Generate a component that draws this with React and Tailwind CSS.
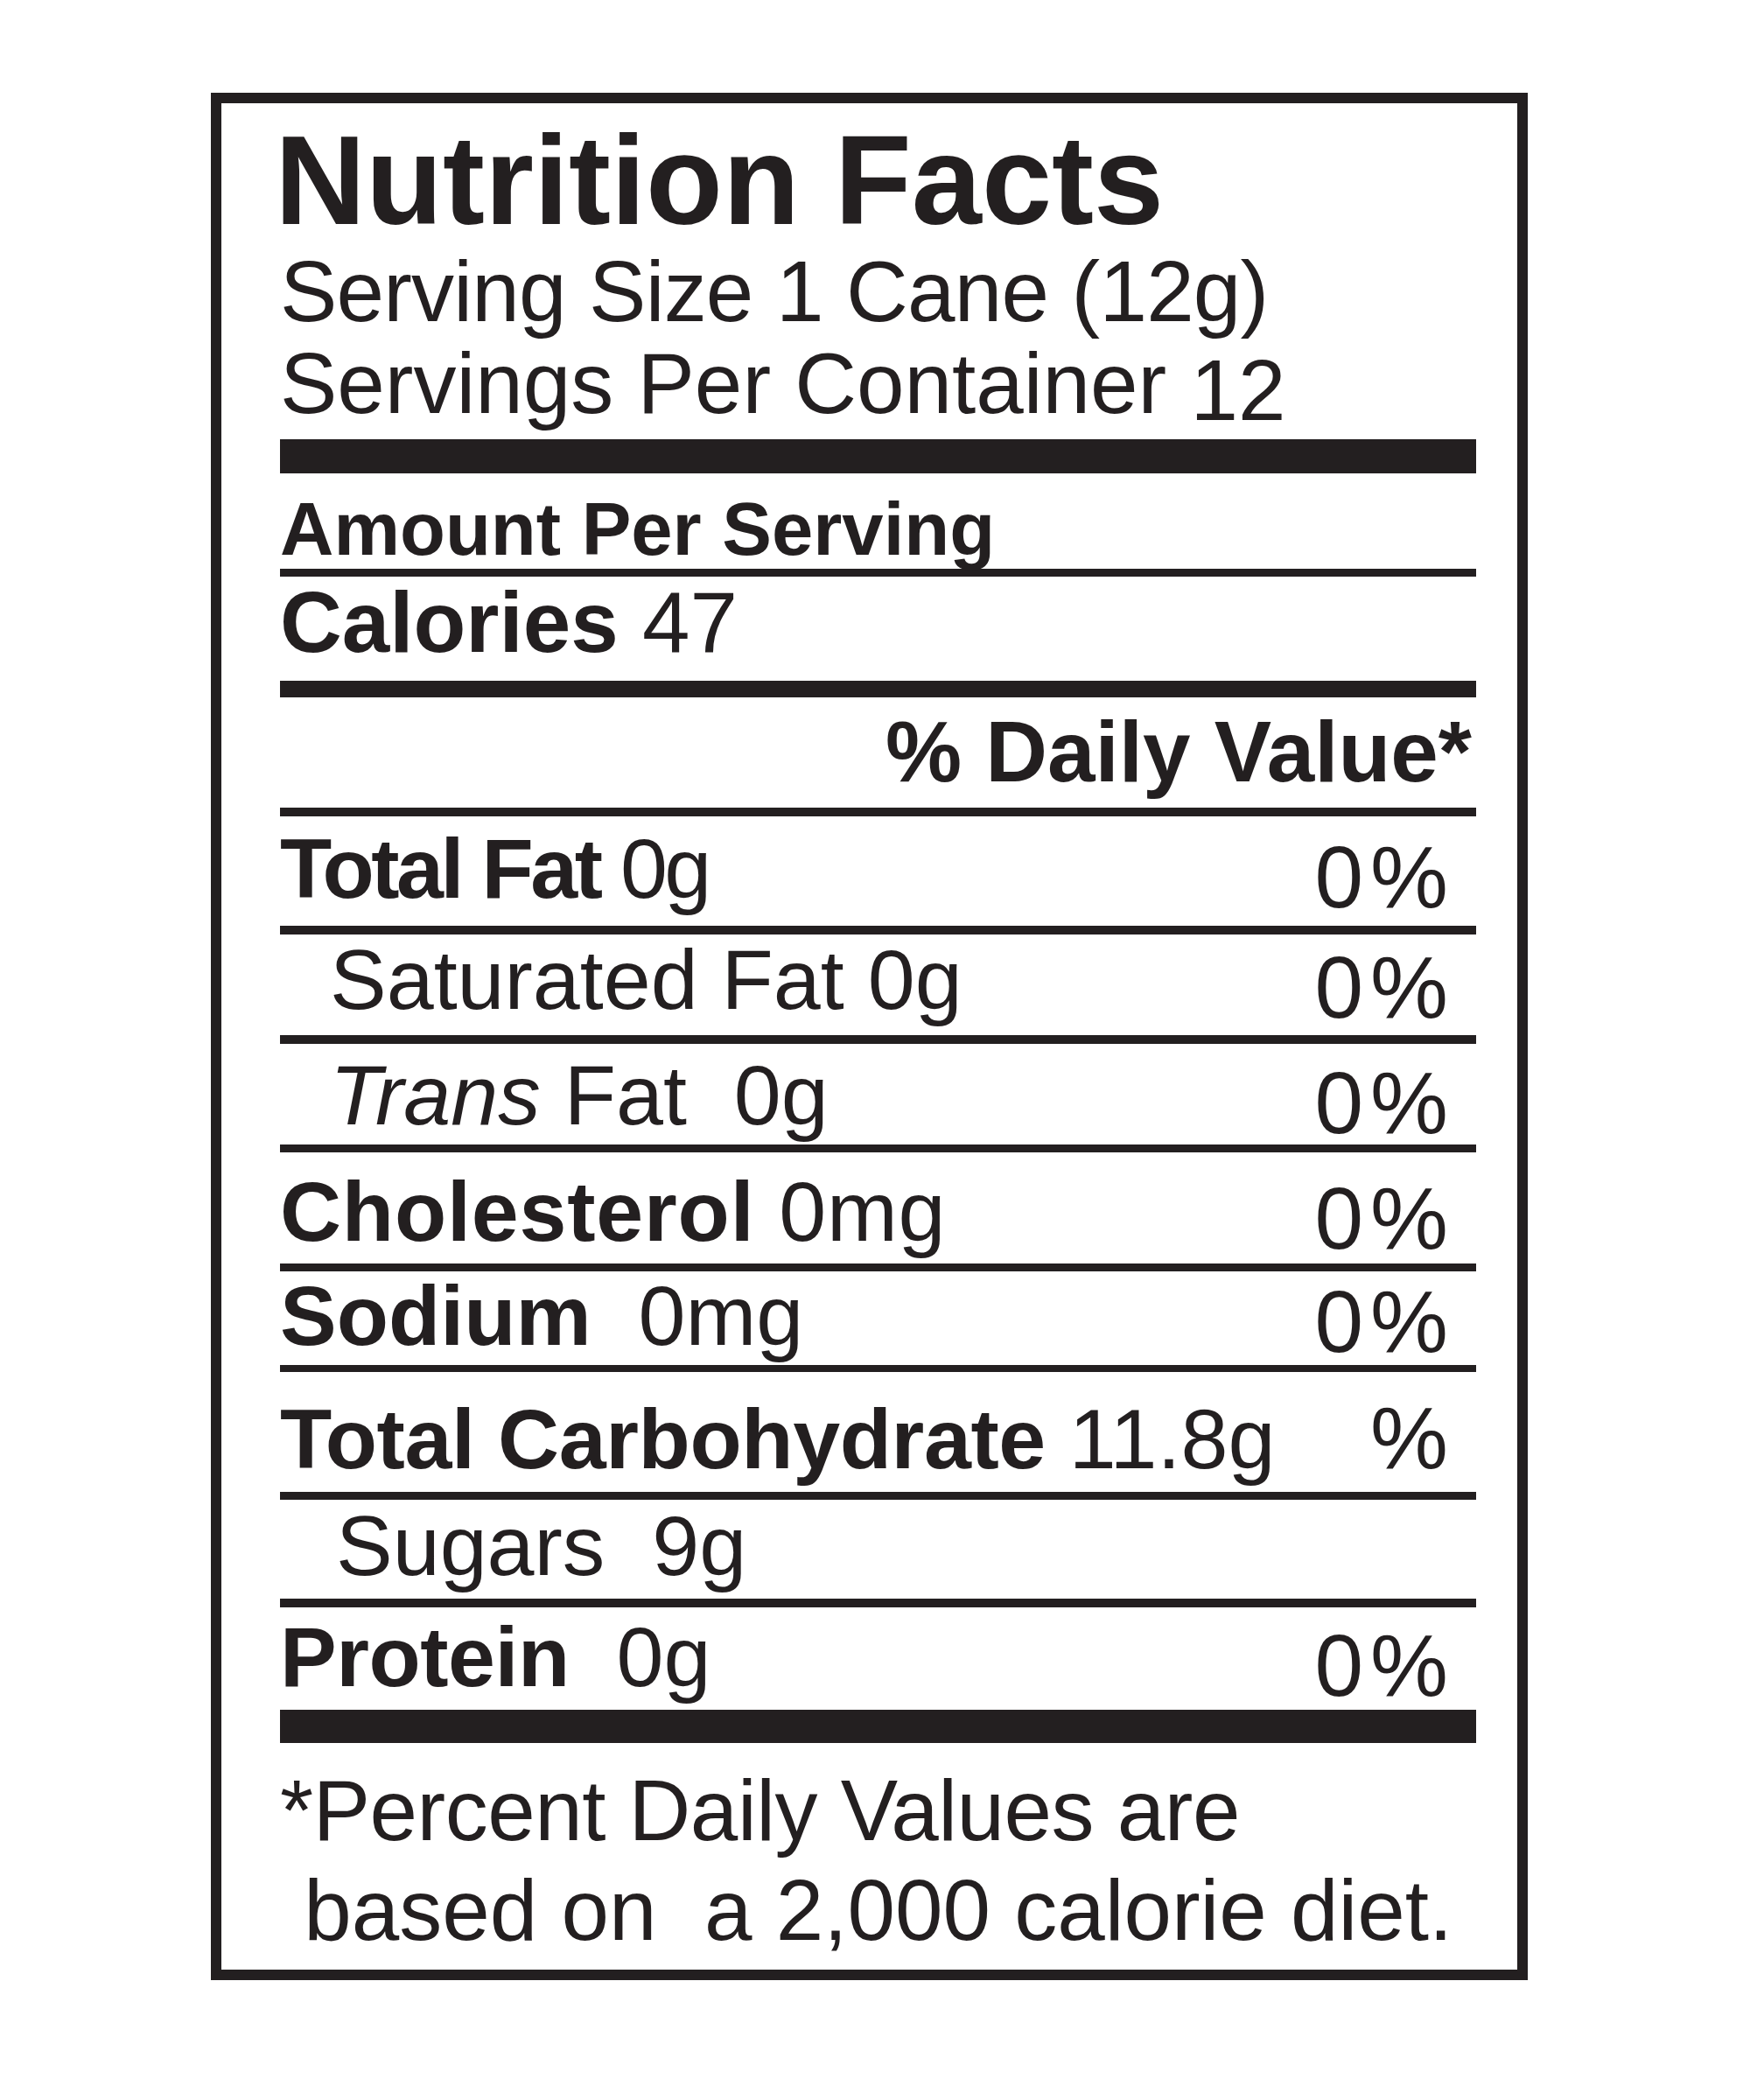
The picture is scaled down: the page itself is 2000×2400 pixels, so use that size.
import React from 'react';

/**
 * Nutrition Facts label
 * - header with serving info
 * - nutrient rows with % daily value
 * - footnote
 */
const rows = [
  {
    key: 'fat',
    h: 'h-[125px]',
    lpt: 'pt-[11px] tracking-[-3.5px]',
    ppt: 'pt-[19px]',
    line: 'h-[10px]',
    label: (
      <>
        <span className="font-bold">Total Fat</span> 0g
      </>
    ),
    pct: '0%',
  },
  {
    key: 'sat',
    h: 'h-[115px]',
    lpt: 'pt-[3px] pl-[57px]',
    ppt: 'pt-[10px]',
    line: 'h-[10px]',
    label: 'Saturated Fat 0g',
    pct: '0%',
  },
  {
    key: 'trans',
    h: 'h-[115px]',
    lpt: 'pt-[10px] pl-[57px]',
    ppt: 'pt-[17px]',
    line: 'h-[9px]',
    label: (
      <>
        <span className="italic">Trans</span> Fat  0g
      </>
    ),
    pct: '0%',
  },
  {
    key: 'chol',
    h: 'h-[127px]',
    lpt: 'pt-[19px] tracking-[0.8px]',
    ppt: 'pt-[25px]',
    line: 'h-[9px]',
    label: (
      <>
        <span className="font-bold">Cholesterol</span> 0mg
      </>
    ),
    pct: '0%',
  },
  {
    key: 'sodium',
    h: 'h-[107px]',
    lpt: 'pt-[2px]',
    ppt: 'pt-[7px]',
    line: 'h-[8px]',
    label: (
      <>
        <span className="font-bold">Sodium</span>  0mg
      </>
    ),
    pct: '0%',
  },
  {
    key: 'carb',
    h: 'h-[137px]',
    lpt: 'pt-[28px]',
    ppt: 'pt-[25px]',
    line: 'h-[9px]',
    label: (
      <>
        <span className="font-bold tracking-[-0.4px]">Total Carbohydrate</span> 11.8g
      </>
    ),
    pct: '%',
  },
  {
    key: 'sugar',
    h: 'h-[113px]',
    lpt: 'pt-[4px] pl-[64px]',
    ppt: '',
    line: 'h-[10px]',
    label: 'Sugars  9g',
    pct: null,
  },
  {
    key: 'protein',
    h: 'h-[117px]',
    lpt: 'pt-[8px]',
    ppt: 'pt-[16px]',
    line: 'h-[38px]',
    label: (
      <>
        <span className="font-bold tracking-[-0.5px]">Protein</span>  0g
      </>
    ),
    pct: '0%',
  },
];

const App = () => {
  return (
    <div className="min-h-[2400px] w-[2000px] bg-white pl-[241px] pt-[106px] font-['Liberation_Sans',Arial,sans-serif] text-[#231f20]">
      <div className="w-[1505px] border-[12px] border-[#231f20] pl-[67px] pr-[47px] pt-[17px] pb-[11px]">
        {/* Header */}
        <h1 className="-ml-[6px] text-[144px] font-bold leading-none">Nutrition Facts</h1>
        <div className="mt-[5px] text-[98px] leading-none tracking-[-0.8px]">Serving Size 1 Cane (12g)</div>
        <div className="mt-[7px] h-[98px] text-[98px] leading-none">
          Servings Per Container <span className="inline-block translate-y-[8px]">12</span>
        </div>
        <div className="mt-[15px] h-[39px] bg-[#231f20]" />

        <div className="mt-[21px] text-[85px] font-bold leading-none">Amount Per Serving</div>
        <div className="mt-[3px] h-[9px] bg-[#231f20]" />
        <div className="mt-[3px] text-[98px] leading-none">
          <span className="font-bold">Calories</span> 47
        </div>
        <div className="mt-[18px] h-[19px] bg-[#231f20]" />

        <div className="mt-[13px] pr-[5px] text-right text-[98px] font-bold leading-none">% Daily Value*</div>
        <div className="mt-[15px] h-[10px] bg-[#231f20]" />

        {/* Nutrient rows */}
        {rows.map((row) => (
          <div key={row.key}>
            <div className={`flex justify-between ${row.h}`}>
              <div className={`whitespace-pre text-[97px] leading-none ${row.lpt}`}>{row.label}</div>
              {row.pct && (
                <div className={`pr-[24px] text-[100px] leading-none tracking-[8px] ${row.ppt}`}>{row.pct}</div>
              )}
            </div>
            <div className={`bg-[#231f20] ${row.line}`} />
          </div>
        ))}

        {/* Footnote */}
        <div className="mt-[20px] whitespace-pre text-[98px] leading-[114px]">
          <div className="tracking-[-0.5px]">*Percent Daily Values are</div>
          <div> based on  a 2,000 calorie diet.</div>
        </div>
      </div>
    </div>
  );
};

export default App;
